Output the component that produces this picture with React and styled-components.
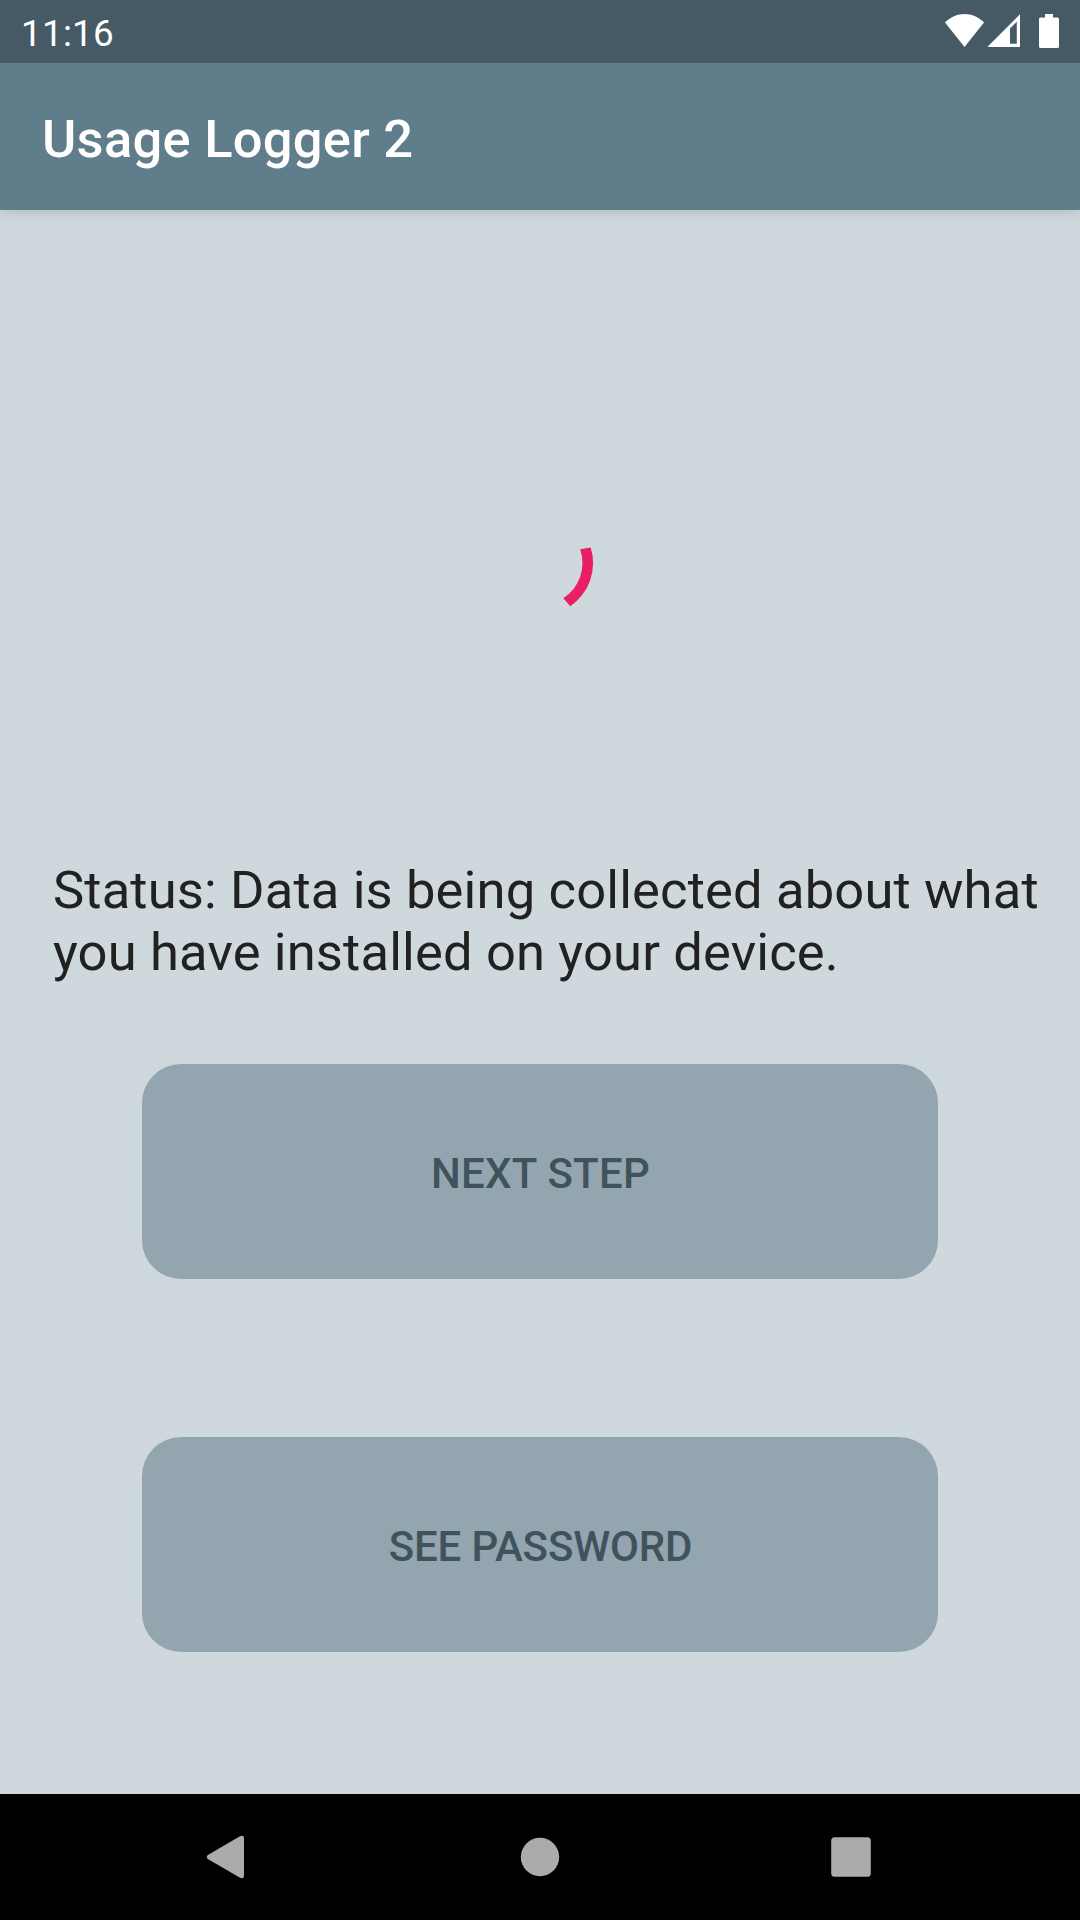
import React from "react";
import styled, { createGlobalStyle } from "styled-components";

const GlobalStyle = createGlobalStyle`
  * { box-sizing: border-box; }
  body {
    margin: 0;
    font-family: Roboto, "Liberation Sans", sans-serif;
    background: #cfd8dc;
  }
`;

const Screen = styled.div`
  display: flex;
  flex-direction: column;
  width: 1080px;
  height: 1920px;
  overflow: hidden;
  background: #cfd8dc;
`;

const StatusBar = styled.header`
  display: flex;
  flex: none;
  justify-content: space-between;
  height: 63px;
  padding: 0 21px;
  background: #455a64;
`;

const Clock = styled.time`
  padding-top: 12px;
  font-size: 36.75px;
  letter-spacing: 0.3px;
  line-height: 43px;
  color: #fff;
`;

const StatusIcons = styled.svg`
  display: block;
  width: 114px;
  height: 63px;
  fill: #fff;
`;

const AppBar = styled.div`
  display: flex;
  flex: none;
  align-items: center;
  height: 147px;
  padding: 4px 42px 0;
  background: #607d8b;
  box-shadow: 0 4px 12px -2px rgba(0, 0, 0, 0.14);
  clip-path: inset(0 0 -24px 0);
`;

const Title = styled.h1`
  margin: 0;
  font-size: 52.5px;
  font-weight: 500;
  letter-spacing: 0.26px;
  line-height: 62px;
  color: #fff;
`;

const Content = styled.main`
  display: flex;
  flex: 1;
  flex-direction: column;
  align-items: center;
`;

const Progress = styled.svg`
  display: block;
  flex: none;
  width: 126px;
  height: 126px;
  margin-top: 290px;
  fill: #e91e63;
`;

const StatusText = styled.p`
  align-self: stretch;
  margin: 233px 0 0;
  padding: 0 0 0 53px;
  font-size: 52.5px;
  letter-spacing: 0.155px;
  line-height: 62px;
  color: #212121;
`;

const Actions = styled.div`
  display: flex;
  flex-direction: column;
  gap: 158px;
  margin-top: 81px;
`;

const ActionButton = styled.button`
  width: 796px;
  height: 215px;
  padding: 4px 0 0 1px;
  border: 0;
  border-radius: 39px;
  background: #93a5ae;
  font-family: inherit;
  font-size: 42px;
  font-weight: 500;
  letter-spacing: ${({ $tracking }) => $tracking};
  line-height: 49px;
  text-transform: uppercase;
  color: #40535d;
`;

const NavBar = styled.nav`
  display: flex;
  flex: none;
  justify-content: center;
  gap: 185px;
  height: 126px;
  background: #000;
`;

const NavButton = styled.button`
  width: 126px;
  height: 126px;
  padding: 0;
  border: 0;
  background: none;

  svg {
    display: block;
    fill: #ababab;
  }
`;

function SystemIcons() {
  return (
    <StatusIcons viewBox="945 0 114 63" aria-hidden="true">
      <path d="M945 22.5C950.3 17.2 957 14 964.5 14S978.700 17.2 984 22.500L964.500 47Z" />
      <path
        fillRule="evenodd"
        d="M987.300 47L1020 14.300V47ZM1010 28.500V43.700H1016.800V21.800Z"
      />
      <path d="M1045 14H1053V17.500H1057.500Q1059 17.500 1059 19V46.500Q1059 48 1057.500 48H1040.500Q1039 48 1039 46.500V19Q1039 17.500 1040.500 17.500H1045Z" />
    </StatusIcons>
  );
}

const navItems = [
  { label: "Back", shape: <path d="M41.800 61L74 42.200Q78 40.700 78 44.500V81.500Q78 85.300 74 83.800L41.800 65Q39.800 63 41.800 61Z" /> },
  { label: "Home", shape: <circle cx="63" cy="63" r="19.200" /> },
  { label: "Recents", shape: <rect x="43.200" y="43.200" width="39.600" height="39.600" rx="3.500" /> },
];

export default function App() {
  return (
    <>
      <GlobalStyle />
      <Screen>
        <StatusBar>
          <Clock>11:16</Clock>
          <SystemIcons />
        </StatusBar>
        <AppBar>
          <Title>Usage Logger 2</Title>
        </AppBar>
        <Content>
          <Progress viewBox="477 500 126 126" role="progressbar">
            <path d="M580.200 549.300L590.700 547.400A52.400 52.400 0 0 1 570.300 606.200L563.300 598.300A42.200 42.200 0 0 0 580.200 549.300Z" />
          </Progress>
          <StatusText>
            Status: Data is being collected about what you have installed on your device.
          </StatusText>
          <Actions>
            <ActionButton $tracking="0.25px" disabled>Next step</ActionButton>
            <ActionButton $tracking="-0.15px" disabled>See password</ActionButton>
          </Actions>
        </Content>
        <NavBar>
          {navItems.map(({ label, shape }) => (
            <NavButton key={label} aria-label={label}>
              <svg width="126" height="126" viewBox="0 0 126 126">
                {shape}
              </svg>
            </NavButton>
          ))}
        </NavBar>
      </Screen>
    </>
  );
}
